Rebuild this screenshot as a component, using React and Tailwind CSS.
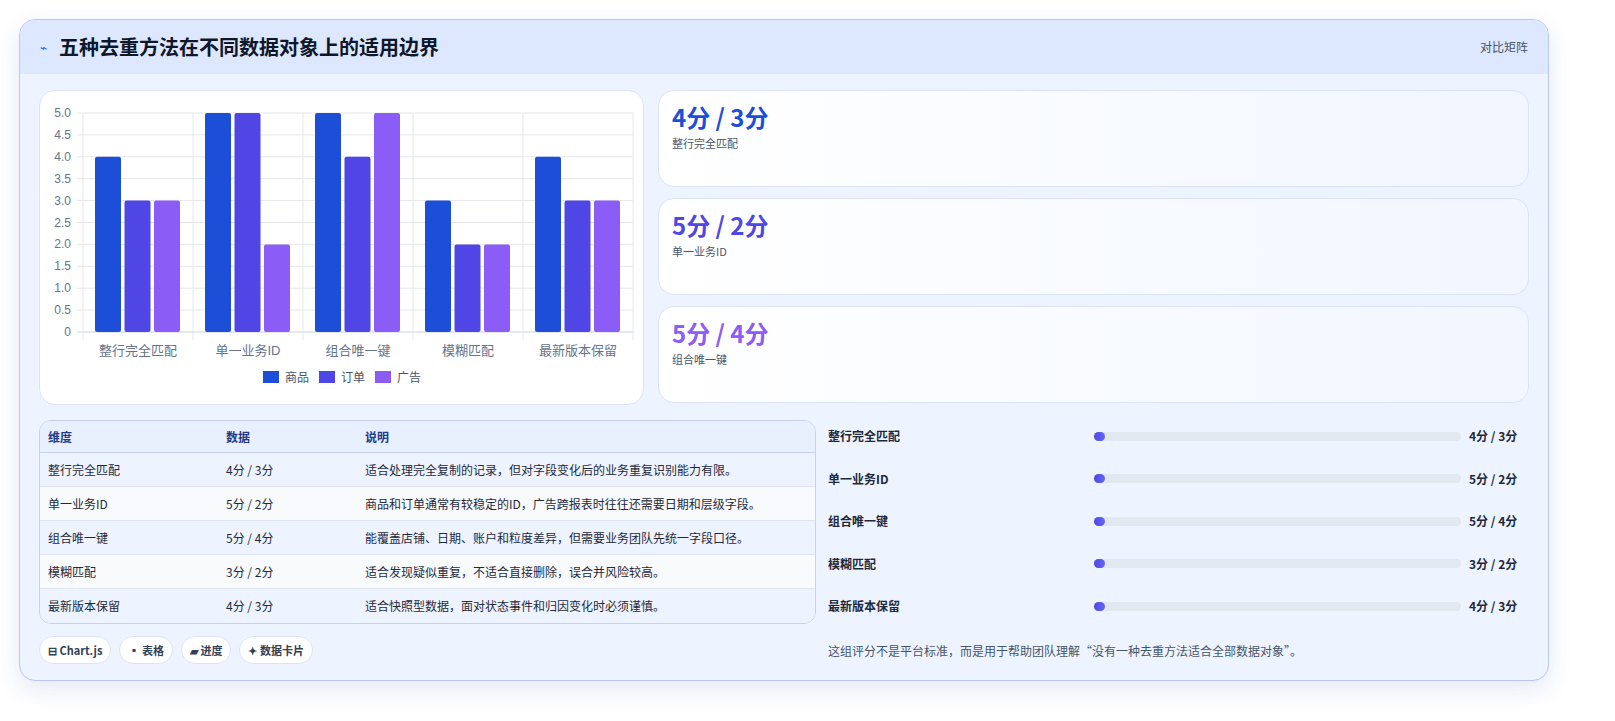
const cats = ["整行完全匹配", "单一业务ID", "组合唯一键", "模糊匹配", "最新版本保留"];
const series = [
  { name: "商品", color: "#1d4ed8", data: [4, 5, 5, 3, 4] },
  { name: "订单", color: "#4f46e5", data: [3, 5, 4, 2, 3] },
  { name: "广告", color: "#8b5cf6", data: [3, 2, 5, 2, 3] },
];
const rows = [
  ["整行完全匹配", "4分 / 3分", "适合处理完全复制的记录，但对字段变化后的业务重复识别能力有限。"],
  ["单一业务ID", "5分 / 2分", "商品和订单通常有较稳定的ID，广告跨报表时往往还需要日期和层级字段。"],
  ["组合唯一键", "5分 / 4分", "能覆盖店铺、日期、账户和粒度差异，但需要业务团队先统一字段口径。"],
  ["模糊匹配", "3分 / 2分", "适合发现疑似重复，不适合直接删除，误合并风险较高。"],
  ["最新版本保留", "4分 / 3分", "适合快照型数据，面对状态事件和归因变化时必须谨慎。"],
];
const stats = [
  ["4分 / 3分", "整行完全匹配", "text-[#1d4ed8]"],
  ["5分 / 2分", "单一业务ID", "text-[#4f46e5]"],
  ["5分 / 4分", "组合唯一键", "text-[#8b5cf6]"],
];

function Chart() {
  const top = 22, bottom = 241, left = 43, right = 593;
  const y = (v) => bottom - (v / 5) * (bottom - top);
  const gw = (right - left) / 5;
  return (
    <svg width="604" height="312" viewBox="0 0 604 312" style={{ fontFamily: "Liberation Sans, Noto Sans CJK SC, sans-serif" }}>
      {[0, 0.5, 1, 1.5, 2, 2.5, 3, 3.5, 4, 4.5, 5].map((v) => (
        <g key={v}>
          <line x1={left - 6} x2={right} y1={y(v)} y2={y(v)} stroke={v === 0 ? "#cbd5e1" : "#e5e7eb"} />
          <text x="31" y={y(v) + 4} textAnchor="end" fontSize="12" fill="#64748b">{v === 0 ? "0" : v.toFixed(1)}</text>
        </g>
      ))}
      {[0, 1, 2, 3, 4, 5].map((i) => (
        <line key={i} x1={left + i * gw} x2={left + i * gw} y1={top} y2={bottom + 8} stroke="#e5e7eb" />
      ))}
      {cats.map((c, i) => (
        <g key={c}>
          {series.map((s, j) => (
            <rect key={s.name} x={left + i * gw + 12 + j * 29.5} y={y(s.data[i])} width="26" height={bottom - y(s.data[i])} rx="2" fill={s.color} />
          ))}
          <text x={left + i * gw + gw / 2} y="264" textAnchor="middle" fontSize="13" fill="#64748b">{c}</text>
        </g>
      ))}
      {series.map((s, j) => (
        <g key={s.name}>
          <rect x={223 + j * 56} y="280" width="16" height="12" fill={s.color} />
          <text x={245 + j * 56} y="291" fontSize="12" fill="#475569">{s.name}</text>
        </g>
      ))}
    </svg>
  );
}

export default function App() {
  return (
    <div className="w-[1615px] h-[721px] bg-white pt-[19px] px-[19px]" style={{ fontFamily: "Noto Sans CJK SC, Noto Sans, sans-serif" }}>
      <div className="w-[1530px] h-[662px] rounded-2xl border border-[#b8c8ee] overflow-hidden bg-[#eef4ff] shadow-[0_8px_24px_rgba(30,64,175,0.12)]">
        <div className="h-[54px] bg-[#dde7fd] flex items-center justify-between px-5">
          <div className="flex items-center gap-3">
            <span className="text-[#2563eb] text-xs">⌁</span>
            <span className="text-[20px] font-bold text-[#0f172a]">五种去重方法在不同数据对象上的适用边界</span>
          </div>
          <span className="text-[12px] text-[#475569]">对比矩阵</span>
        </div>
        <div className="px-[19px] pt-4">
          <div className="flex gap-[14px]">
            <div className="w-[605px] h-[315px] bg-white rounded-2xl border border-[#dbe4f5]">
              <Chart />
            </div>
            <div className="flex-1 flex flex-col gap-[11px]">
              {stats.map(([v, l, c]) => (
                <div key={l} className="h-[97px] rounded-2xl border border-[#dbe4f5] bg-gradient-to-r from-white to-[#f1f6ff] px-[13px] pt-[10px]">
                  <div className={`text-[24px] font-bold leading-[32px] ${c}`}>{v}</div>
                  <div className="text-[11px] text-[#475569] mt-[2px]">{l}</div>
                </div>
              ))}
            </div>
          </div>
          <div className="flex gap-3 mt-[15px]">
            <div className="w-[777px]">
              <div className="rounded-xl border border-[#c7d3ea] overflow-hidden bg-[#eef4ff]">
                <div className="flex h-[32px] items-center text-[12px] font-bold text-[#1e3a8a] bg-[#e8f0fe] border-b border-[#c7d3ea]">
                  <div className="w-[186px] pl-2">维度</div>
                  <div className="w-[139px]">数据</div>
                  <div>说明</div>
                </div>
                {rows.map((r, i) => (
                  <div key={r[0]} className={`flex h-[34px] items-center text-[12px] text-[#1e293b] ${i % 2 ? "bg-[#f8fafc]" : "bg-[#eef4ff]"} ${i < 4 ? "border-b border-[#dde5f2]" : ""}`}>
                    <div className="w-[186px] pl-2">{r[0]}</div>
                    <div className="w-[139px]">{r[1]}</div>
                    <div>{r[2]}</div>
                  </div>
                ))}
              </div>
              <div className="flex gap-2 mt-[12px]">
                {["⊟ Chart.js", "▪ 表格", "▰ 进度", "✦ 数据卡片"].map((t) => (
                  <span key={t} className="h-[28px] px-2 rounded-full bg-white border border-[#dbe4f5] text-[11px] font-bold text-[#334155] flex items-center">{t}</span>
                ))}
              </div>
            </div>
            <div className="flex-1 -mt-[5px]">
              {rows.map((r) => (
                <div key={r[0]} className="h-[42.5px] flex items-center text-[12px] font-bold text-[#1e293b]">
                  <div className="w-[266px]">{r[0]}</div>
                  <div className="w-[367px] h-[9px] rounded-full bg-[#e2e8f0]">
                    <div className="w-[11px] h-[9px] rounded-full bg-gradient-to-r from-[#4f46e5] to-[#6366f1]"></div>
                  </div>
                  <div className="ml-2">{r[1]}</div>
                </div>
              ))}
              <div className="mt-[14px] text-[12px] text-[#475569]">这组评分不是平台标准，而是用于帮助团队理解“没有一种去重方法适合全部数据对象”。</div>
            </div>
          </div>
        </div>
      </div>
    </div>
  );
}
